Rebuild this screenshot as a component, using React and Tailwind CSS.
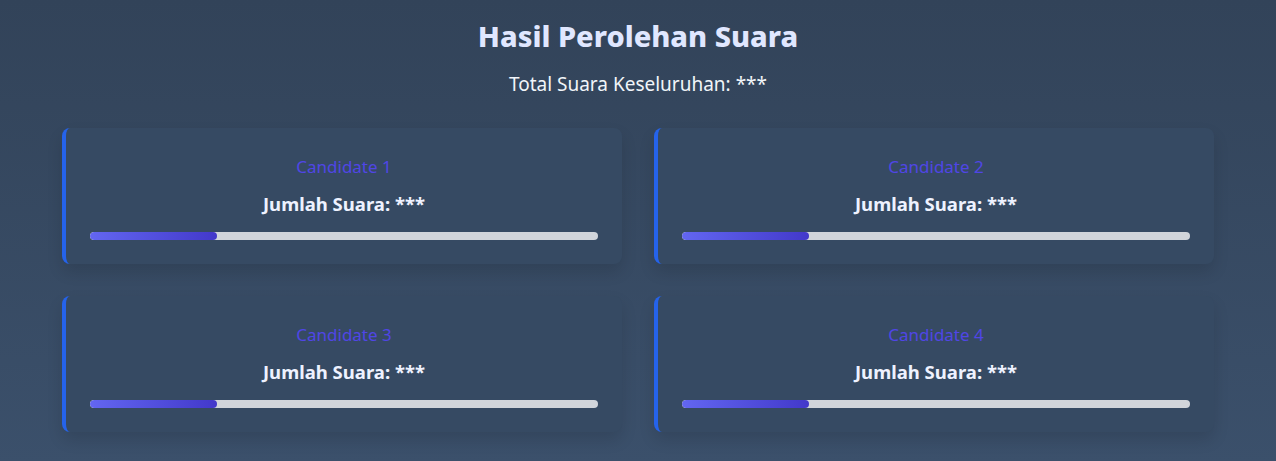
const candidates = [
  { name: "Candidate 1", pct: 25 },
  { name: "Candidate 2", pct: 25 },
  { name: "Candidate 3", pct: 25 },
  { name: "Candidate 4", pct: 25 },
]

const CandidateCard = ({ name, pct }) => (
  <div className="rounded-lg border-l-4 border-[#2563eb] bg-[#364a63] p-6 text-center shadow-[0_8px_16px_rgba(0,0,0,0.12)]">
    <h3 className="mt-[3px] mb-[11px] text-[17px] leading-6 text-[#5046e6]">{name}</h3>
    <p className="mb-[14px] text-[18.5px] leading-7 font-bold text-[#eef2ff]">Jumlah Suara: ***</p>
    <div className="h-2 w-full overflow-hidden rounded-full bg-[#d1d5db]">
      <div
        className="h-full rounded-full bg-gradient-to-r from-[#6366f1] to-[#4338ca]"
        style={{ width: `${pct}%` }}
      />
    </div>
  </div>
)

export default function App() {
  return (
    <div
      className="min-h-[461px] bg-gradient-to-b from-[#324359] to-[#3b506b] px-4 pt-[18px] pb-8"
      style={{ fontFamily: '"Noto Sans", "Open Sans", sans-serif' }}
    >
      <h1 className="text-center text-[29px] leading-9 font-extrabold text-[#e0e7ff]">
        Hasil Perolehan Suara
      </h1>
      <p className="mt-4 text-center text-[19px] leading-7 text-[#f1f5f9]">
        Total Suara Keseluruhan: ***
      </p>
      <div className="mx-auto mt-[30px] grid max-w-6xl grid-cols-2 gap-8">
        {candidates.map(c => (
          <CandidateCard key={c.name} name={c.name} pct={c.pct} />
        ))}
      </div>
    </div>
  )
}
